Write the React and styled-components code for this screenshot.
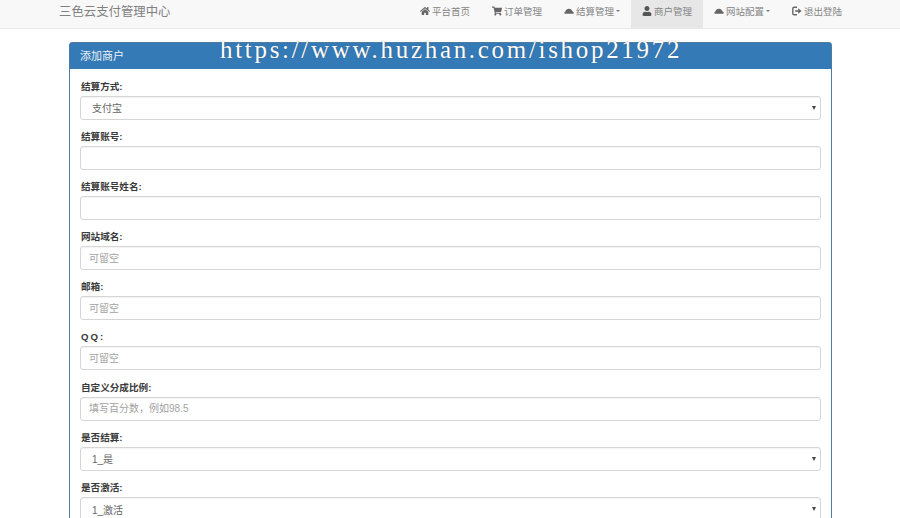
import React from 'react';
import styled, { createGlobalStyle } from 'styled-components';
import { FaHome, FaShoppingCart, FaUser } from 'react-icons/fa';

const GlobalStyle = createGlobalStyle`
  html, body {
    margin: 0;
    height: 518px;
    overflow: hidden;
    background: #fff;
  }
  body {
    font-family: "Liberation Sans", "Noto Sans CJK SC", sans-serif;
    color: #333;
  }
  * {
    box-sizing: border-box;
  }
`;

const Page = styled.div`
  position: relative;
  width: 900px;
  height: 518px;
  overflow: hidden;
`;

const Navbar = styled.nav`
  display: flex;
  justify-content: space-between;
  height: 29px;
  padding: 0 47px 0 59px;
  background: #f8f8f8;
  border-bottom: 1px solid #e9e9e9;
`;

const Brand = styled.div`
  font-size: 12.4px;
  line-height: 24px;
  color: #808080;
`;

const NavList = styled.div`
  display: flex;
`;

const NavItem = styled.div`
  display: flex;
  align-items: center;
  gap: 2px;
  height: 28px;
  padding: 0 11px 6px;
  font-size: 9.5px;
  color: #858585;
  background: ${(p) => (p.$active ? '#e7e7e7' : 'transparent')};

  svg {
    width: 10px;
    height: 10px;
    color: ${(p) => (p.$active ? '#555' : '#666')};
  }
`;

const Caret = styled.span`
  width: 0;
  height: 0;
  border-top: 2.5px solid #777;
  border-left: 2.5px solid transparent;
  border-right: 2.5px solid transparent;
`;

const Content = styled.main`
  padding: 13px 68px 0 69px;
`;

const Panel = styled.section`
  border: 1px solid #4f7b9e;
  border-radius: 3px;
  background: #fff;
`;

const PanelHeading = styled.h3`
  margin: 0;
  height: 26px;
  padding-left: 10px;
  font-size: 11px;
  font-weight: 400;
  line-height: 27px;
  color: #eef3f8;
  background: #337ab7;
`;

const PanelBody = styled.form`
  padding: 9.5px 10px 0;
`;

const Group = styled.div`
  margin-bottom: 9.2px;
`;

const Label = styled.label`
  display: block;
  height: 15px;
  margin-bottom: 2px;
  padding-left: 1px;
  font-size: 9.6px;
  font-weight: 700;
  line-height: 15px;
  letter-spacing: ${(p) => (p.$wide ? '2px' : '0')};
  color: #3a3a3a;
`;

const Input = styled.input`
  display: block;
  width: 100%;
  height: 24px;
  padding: 0 8px;
  font: 400 10px "Liberation Sans", "Noto Sans CJK SC", sans-serif;
  color: #555;
  background: #fff;
  border: 1px solid #d6d6d6;
  border-radius: 3px;
  box-shadow: inset 0 1px 1px rgba(0, 0, 0, 0.05);

  &::placeholder {
    color: #a2a2a2;
    opacity: 1;
  }
`;

const SelectBox = styled.div`
  position: relative;

  &::after {
    content: '';
    position: absolute;
    top: 10px;
    right: 5px;
    border-top: 4px solid #444;
    border-left: 2px solid transparent;
    border-right: 2px solid transparent;
  }
`;

const Select = styled.select`
  display: block;
  width: 100%;
  height: 24px;
  padding: 2px 11px 0;
  appearance: none;
  font: 400 10px "Liberation Sans", "Noto Sans CJK SC", sans-serif;
  color: #666;
  background: #fff;
  border: 1px solid #d6d6d6;
  border-radius: 3px;
  box-shadow: inset 0 1px 1px rgba(0, 0, 0, 0.05);
`;

const Watermark = styled.div`
  position: absolute;
  top: 35px;
  left: 220px;
  font-family: "Liberation Serif", serif;
  font-size: 25px;
  line-height: 30px;
  letter-spacing: 2.69px;
  white-space: nowrap;
  color: #fff;
  text-shadow: 0 0 1px rgba(70, 70, 80, 0.7);
`;

const CloudIcon = () => (
  <svg viewBox="0 0 10 10" fill="currentColor">
    <path d="M1.4 7.8C.2 7.8-.2 5.9 1.4 5.5 1.8 3.6 3.4 2.5 5.2 2.7 6.8 2.8 8 4 8.5 5.4 10.2 5.6 10.2 7.8 8.7 7.8Z" />
  </svg>
);

const LogoutIcon = () => (
  <svg viewBox="0 0 10 10" fill="none" stroke="currentColor">
    <path d="M5 1.2H2.2C1.3 1.2.8 1.8.8 2.6V7.4C.8 8.2 1.3 8.8 2.2 8.8H5" strokeWidth="1.4" />
    <path d="M3.2 4.2H6.2V2.2L9.6 5 6.2 7.8V5.8H3.2Z" fill="currentColor" stroke="none" />
  </svg>
);

const navItems = [
  { icon: <FaHome />, text: '平台首页' },
  { icon: <FaShoppingCart />, text: '订单管理' },
  { icon: <CloudIcon />, text: '结算管理', caret: true },
  { icon: <FaUser />, text: '商户管理', active: true },
  { icon: <CloudIcon />, text: '网站配置', caret: true },
  { icon: <LogoutIcon />, text: '退出登陆' },
];

const fields = [
  { label: '结算方式:', options: ['支付宝'] },
  { label: '结算账号:' },
  { label: '结算账号姓名:' },
  { label: '网站域名:', placeholder: '可留空' },
  { label: '邮箱:', placeholder: '可留空' },
  { label: 'QQ:', placeholder: '可留空', wide: true },
  { label: '自定义分成比例:', placeholder: '填写百分数，例如98.5' },
  { label: '是否结算:', options: ['1_是'] },
  { label: '是否激活:', options: ['1_激活'] },
];

const App = () => {
  return (
    <Page>
      <GlobalStyle />
      <Navbar>
        <Brand>三色云支付管理中心</Brand>
        <NavList>
          {navItems.map((item, i) => {
            return (
              <NavItem key={i} $active={item.active}>
                {item.icon}
                {item.text}
                {item.caret && <Caret />}
              </NavItem>
            );
          })}
        </NavList>
      </Navbar>
      <Content>
        <Panel>
          <PanelHeading>添加商户</PanelHeading>
          <PanelBody>
            {fields.map((field, i) => {
              return (
                <Group key={i}>
                  <Label $wide={field.wide}>{field.label}</Label>
                  {field.options ? (
                    <SelectBox>
                      <Select>
                        {field.options.map((o) => (
                          <option key={o}>{o}</option>
                        ))}
                      </Select>
                    </SelectBox>
                  ) : (
                    <Input placeholder={field.placeholder} />
                  )}
                </Group>
              );
            })}
          </PanelBody>
        </Panel>
      </Content>
      <Watermark>https://www.huzhan.com/ishop21972</Watermark>
    </Page>
  );
};

export default App;
